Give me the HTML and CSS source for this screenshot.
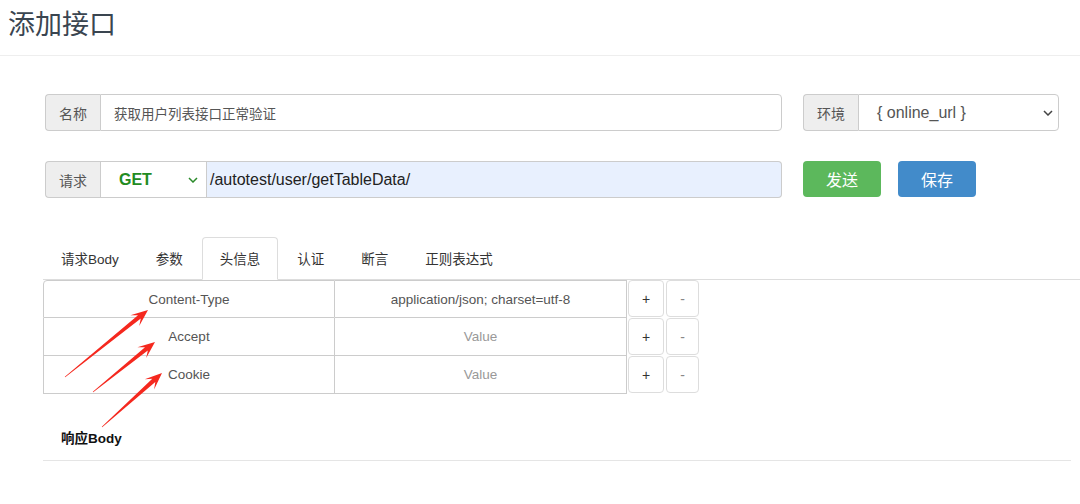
FILE: index.html
```html
<!DOCTYPE html>
<html lang="zh">
<head>
<meta charset="utf-8">
<title>添加接口</title>
<link rel="stylesheet" href="styles.css">
</head>
<body>
<header class="page-header">
  <h1 class="page-title">添加接口</h1>
</header>
<main class="main">
  <div class="row">
    <div class="input-group name-group">
      <span class="addon">名称</span>
      <div class="field name-field">获取用户列表接口正常验证</div>
    </div>
    <div class="input-group env-group">
      <span class="addon">环境</span>
      <div class="field select-field env-field">
        <span>{ online_url }</span>
        <svg class="chev" width="10" height="6" viewBox="0 0 10 6"><path d="M1 1 L5 5 L9 1" fill="none" stroke="#444" stroke-width="1.5"/></svg>
      </div>
    </div>
  </div>
  <div class="row row-req">
    <div class="input-group req-group">
      <span class="addon">请求</span>
      <div class="field select-field method-field">
        <span class="method">GET</span>
        <svg class="chev" width="10" height="6" viewBox="0 0 10 6"><path d="M1 1 L5 5 L9 1" fill="none" stroke="#2a8a2a" stroke-width="1.5"/></svg>
      </div>
      <div class="field url-field">/autotest/user/getTableData/</div>
    </div>
    <button class="btn btn-send">发送</button>
    <button class="btn btn-save">保存</button>
  </div>
  <nav class="tabs">
    <span class="tab">请求Body</span>
    <span class="tab">参数</span>
    <span class="tab active">头信息</span>
    <span class="tab">认证</span>
    <span class="tab">断言</span>
    <span class="tab">正则表达式</span>
  </nav>
  <div class="headers">
    <div class="hrow first">
      <div class="cell">Content-Type</div>
      <div class="cell">application/json; charset=utf-8</div>
      <span class="sbtn plus">+</span>
      <span class="sbtn minus">-</span>
    </div>
    <div class="hrow">
      <div class="cell">Accept</div>
      <div class="cell placeholder">Value</div>
      <span class="sbtn plus">+</span>
      <span class="sbtn minus">-</span>
    </div>
    <div class="hrow">
      <div class="cell">Cookie</div>
      <div class="cell placeholder">Value</div>
      <span class="sbtn plus">+</span>
      <span class="sbtn minus">-</span>
    </div>
  </div>
  <h3 class="resp-title">响应Body</h3>
  <div class="resp-line"></div>
</main>
<svg class="arrows" width="1080" height="504" viewBox="0 0 1080 504">
  <polygon fill="#f5281e" points="64.8,376.8 138.0,315.2 130.4,315.3 148,310 139.2,326.1 140.8,318.6 65.2,377.2"/>
  <polygon fill="#f5281e" points="92.8,391.8 145.0,347.2 137.4,347.3 155,342 146.2,358.1 147.8,350.6 93.2,392.2"/>
  <polygon fill="#f5281e" points="101.8,426.8 152.3,378.8 144.7,379.2 162,373 154.1,389.6 155.3,382.0 102.2,427.2"/>
</svg>
</body>
</html>
```
FILE: styles.css
```css
* { box-sizing: border-box; }
html, body { margin: 0; padding: 0; background: #fff; }
body {
  position: relative;
  width: 1080px;
  height: 504px;
  overflow: hidden;
  font-family: "Liberation Sans", Arial, "Noto Sans CJK SC", sans-serif;
  font-size: 14px;
  color: #555;
}
.page-header {
  height: 56px;
  border-bottom: 1px solid #eee;
  padding: 3px 0 0 8px;
}
.page-title {
  margin: 0;
  font-family: "Noto Sans CJK SC", sans-serif;
  font-size: 27px;
  font-weight: 400;
  line-height: 40px;
  color: #3a4550;
}
.main { padding: 38px 0 0 45px; }
.row { display: flex; height: 37px; }
.row-req { margin-top: 30px; }
.input-group { display: flex; height: 37px; }
.name-group { width: 737px; }
.env-group { width: 256px; margin-left: 21px; }
.req-group { width: 737px; }
.addon {
  width: 55px;
  flex: none;
  display: flex;
  align-items: center;
  justify-content: center;
  background: #eee;
  border: 1px solid #ccc;
  border-right: none;
  border-radius: 4px 0 0 4px;
  font-family: "Noto Sans CJK SC", sans-serif;
  font-size: 14px;
  color: #555;
}
.field {
  flex: 1;
  display: flex;
  align-items: center;
  border: 1px solid #ccc;
  background: #fff;
  border-radius: 0 4px 4px 0;
}
.name-field {
  padding-left: 13px;
  font-family: "Noto Sans CJK SC", sans-serif;
  font-size: 13.5px;
  color: #555;
}
.select-field { justify-content: space-between; }
.env-field {
  padding: 0 5px 0 18px;
  font-size: 16px;
  color: #555;
}
.method-field {
  flex: none;
  width: 107px;
  border-radius: 0;
  padding: 0 8px 0 18px;
}
.method { font-size: 16px; font-weight: 700; color: #228b22; }
.url-field {
  border-left: none;
  background: #e8f0fe;
  padding-left: 3px;
  font-size: 16px;
  color: #222;
}
.btn {
  height: 36px;
  width: 78px;
  border: none;
  border-radius: 4px;
  color: #fff;
  font-family: "Noto Sans CJK SC", sans-serif;
  font-size: 16px;
  padding: 0;
}
.btn-send { background: #5cb85c; margin-left: 21px; }
.btn-save { background: #428bca; margin-left: 17px; }
.tabs {
  display: flex;
  margin: 39px 0 0 -2px;
  height: 43px;
  border-bottom: 1px solid #ddd;
}
.tab {
  display: flex;
  align-items: center;
  padding: 0 17px 2px;
  margin-right: 1px;
  height: 43px;
  border: 1px solid transparent;
  border-radius: 4px 4px 0 0;
  font-family: "Liberation Sans", "Noto Sans CJK SC", sans-serif;
  font-size: 13.5px;
  color: #333;
}
.tab.active {
  border-color: #ddd;
  border-bottom-color: #fff;
  background: #fff;
  margin-bottom: -1px;
}
.headers { margin-left: -2px; }
.hrow { display: flex; height: 38px; }
.cell {
  width: 292px;
  height: 38px;
  display: flex;
  align-items: center;
  justify-content: center;
  border: 1px solid #ccc;
  font-size: 13.5px;
  color: #555;
}
.hrow + .hrow .cell { border-top: none; height: 38px; }
.cell + .cell { border-left: none; }
.first .cell:first-child { border-top-left-radius: 4px; }
.cell.placeholder { color: #999; }
.sbtn {
  display: flex;
  align-items: center;
  justify-content: center;
  height: 37px;
  border: 1px solid #ddd;
  border-radius: 4px;
  font-size: 14px;
  background: #fff;
}
.plus { width: 36px; margin-left: 1px; color: #333; }
.minus { width: 33px; margin-left: 2px; color: #888; }
.resp-title {
  margin: 35px 0 0 16px;
  font-family: "Liberation Sans", "Noto Sans CJK SC", sans-serif;
  font-size: 13.5px;
  font-weight: 700;
  line-height: 20px;
  color: #111;
}
.resp-line {
  margin: 11px 9px 0 -2px;
  border-top: 1px solid #e5e5e5;
}
.arrows { position: absolute; left: 0; top: 0; pointer-events: none; }
```
